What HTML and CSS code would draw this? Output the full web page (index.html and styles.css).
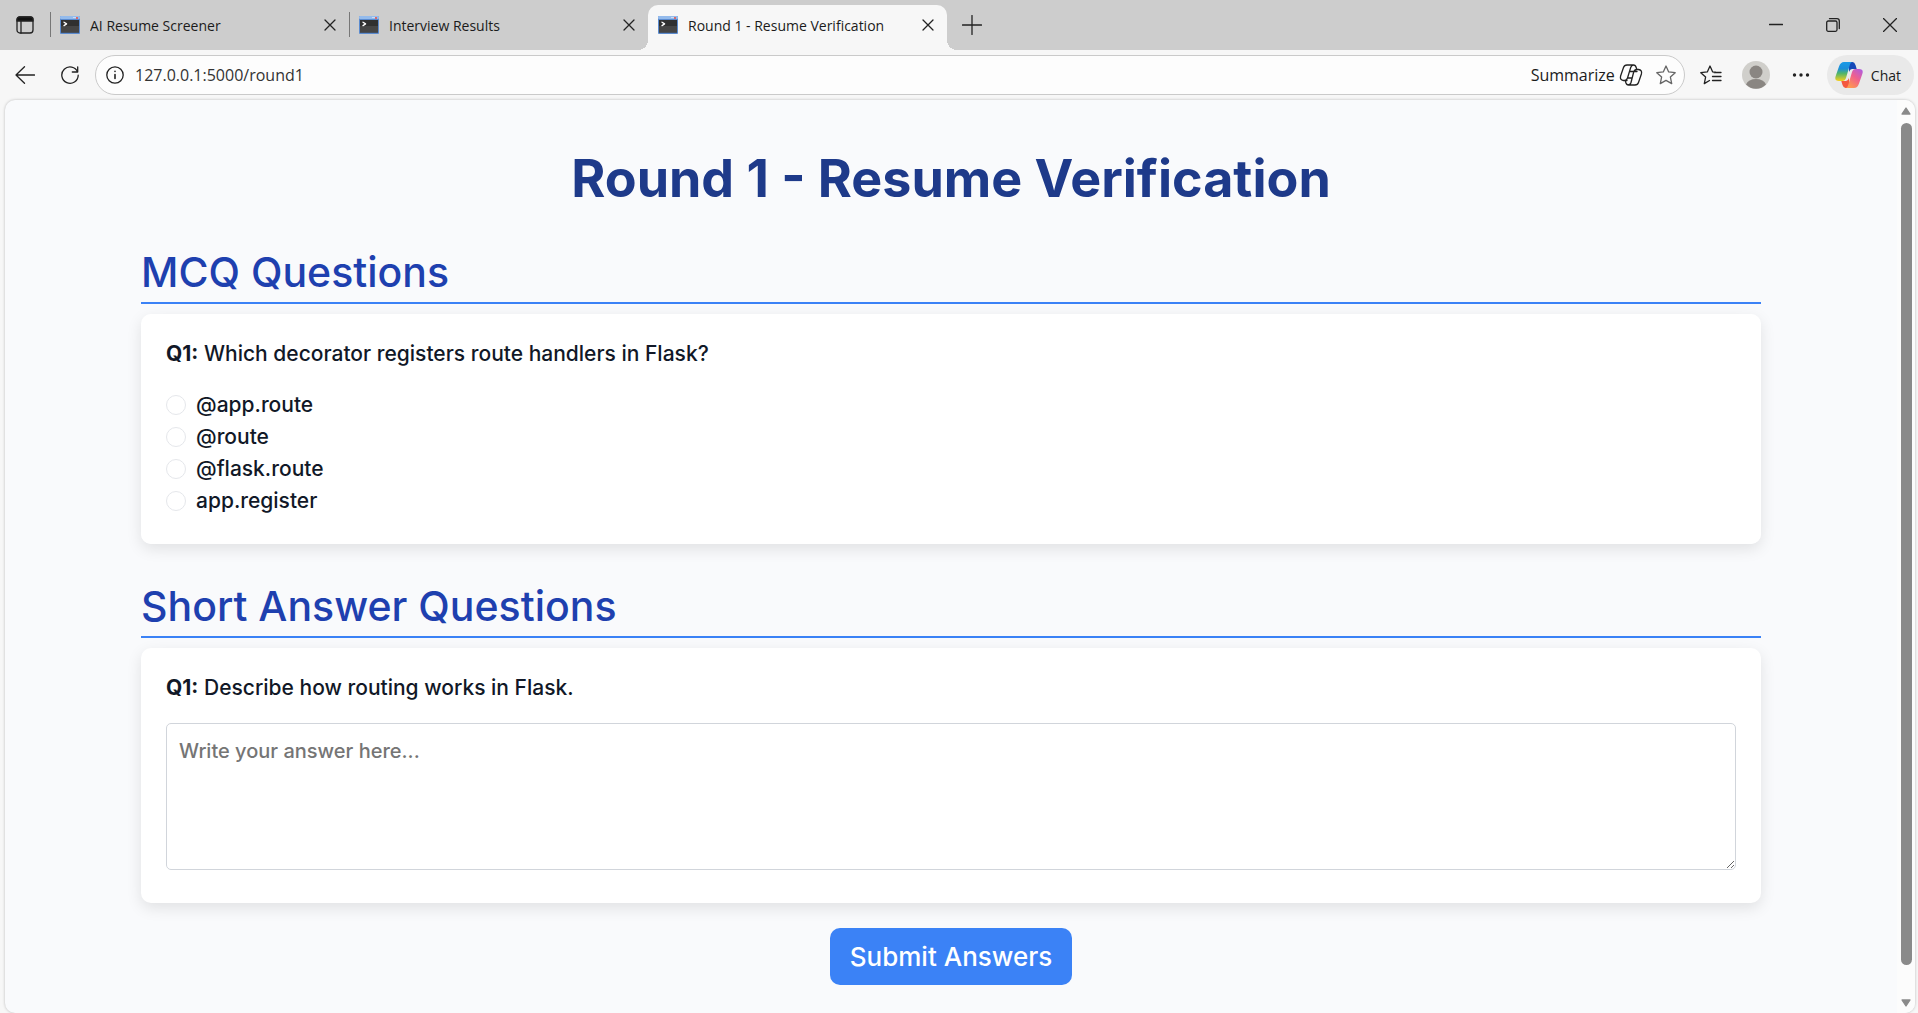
FILE: index.html
```html
<!DOCTYPE html>
<html lang="en">
<head>
  <meta charset="UTF-8">
  <meta name="viewport" content="width=device-width, initial-scale=1.0">
  <title>Round 1 - Resume Verification</title>
  <link rel="stylesheet" href="styles.css">
</head>
<body>
  <!-- Shared icons -->
  <svg class="sprite" aria-hidden="true">
    <defs>
      <symbol id="terminal" viewBox="0 0 20 18">
        <rect width="20" height="18" rx="1" fill="#5b8bcf"/>
        <rect width="20" height="3" rx="1" fill="#94bbec"/>
        <rect x="13" y="1" width="3" height="1" fill="#c9dcf5"/>
        <rect x="16" y="1" width="2" height="2" fill="#d8696b"/>
        <rect x="1" y="4" width="18" height="12.500" fill="#303030"/>
        <rect x="1" y="10" width="18" height="6.500" fill="#454545"/>
        <path d="M4 6.200l2.600 1.700L4 9.600" stroke="#fff" stroke-width="1.300" fill="none"/>
      </symbol>
      <symbol id="cross" viewBox="0 0 12 12"><path d="M1 1l10 10M11 1L1 11"/></symbol>
    </defs>
  </svg>

  <header class="tab-strip">
    <button type="button" class="icon-button tab-actions" aria-label="Tab actions">
      <svg width="18" height="18" viewBox="0 0 18 18"><rect x="1" y="1" width="16" height="16" rx="3"/><path d="M1 5V3.500Q1 1 3.500 1h11Q17 1 17 3.500V5z" fill="#111"/><path d="M5 5v12"/></svg>
    </button>
    <div class="tab">
      <svg class="favicon"><use href="#terminal"/></svg>
      <span class="tab-title">AI Resume Screener</span>
      <button type="button" class="icon-button close" aria-label="Close tab"><svg width="12" height="12"><use href="#cross"/></svg></button>
    </div>
    <div class="tab">
      <svg class="favicon"><use href="#terminal"/></svg>
      <span class="tab-title">Interview Results</span>
      <button type="button" class="icon-button close" aria-label="Close tab"><svg width="12" height="12"><use href="#cross"/></svg></button>
    </div>
    <div class="tab active">
      <svg class="favicon"><use href="#terminal"/></svg>
      <span class="tab-title">Round 1 - Resume Verification</span>
      <button type="button" class="icon-button close" aria-label="Close tab"><svg width="12" height="12"><use href="#cross"/></svg></button>
    </div>
    <button type="button" class="icon-button new-tab" aria-label="New tab">
      <svg width="20" height="20" viewBox="0 0 20 20"><path d="M10 .5v19M.5 10h19"/></svg>
    </button>
    <div class="window-buttons">
      <button type="button" class="icon-button" aria-label="Minimize"><svg width="14" height="14" viewBox="0 0 14 14"><path d="M.5 6.500h13"/></svg></button>
      <button type="button" class="icon-button" aria-label="Restore"><svg width="14" height="14" viewBox="0 0 14 14"><rect x=".7" y="3" width="10.300" height="10.300" rx="1.500"/><path d="M3.500.7H11q2.300 0 2.300 2.300v7.500"/></svg></button>
      <button type="button" class="icon-button" aria-label="Close"><svg width="14" height="14" viewBox="0 0 14 14"><path d="M.5.5l13 13M13.500.5l-13 13"/></svg></button>
    </div>
  </header>

  <nav class="toolbar">
    <button type="button" class="icon-button" aria-label="Back"><svg width="20" height="18" viewBox="0 0 20 18"><path d="M19.500 9H1M9.500.7L1 9l8.500 8.300"/></svg></button>
    <button type="button" class="icon-button" aria-label="Refresh"><svg width="18" height="18" viewBox="0 0 18 18"><path d="M16.600 6A8.200 8.200 0 1 0 17.200 9.200M16.700.8V6h-5.400"/></svg></button>
    <div class="address-bar">
      <svg class="info" width="18" height="18" viewBox="0 0 18 18"><circle cx="9" cy="9" r="8.200"/><path d="M9 8.500v4M9 5.300v.2" stroke-width="1.600"/></svg>
      <input type="text" class="url" aria-label="Address" value="127.0.0.1:5000/round1">
      <button type="button" class="summarize">Summarize
        <svg width="24" height="22" viewBox="0 0 24 22"><path d="M8 16.500H4.500Q.6 16 1.600 12L4.500 3.500Q5.300 1 8 1h6.500Q16.500 1 17.200 3.500L17.800 5.500h1.700q3.900.5 2.900 4.500l-2.900 8.500Q18.700 21 16 21H9.500Q7.500 21 6.800 18.500L6.300 16.500M14.500 1Q12.500 1 11.700 3.500L8.500 14q-.8 2.500-3 2.500M17.800 5.500q-2.300 0-3.100 2.500L12 18.500Q11.200 21 9 21M8.500 14H13M11 7.500h7"/></svg>
      </button>
      <button type="button" class="icon-button star" aria-label="Add to favorites"><svg width="20" height="20" viewBox="0 0 20 20"><path d="M10 1l2.700 5.900 6.500.8-4.800 4.400 1.300 6.500L10 15.400l-5.700 3.200 1.300-6.500L.8 7.700l6.500-.8z"/></svg></button>
    </div>
    <button type="button" class="icon-button favorites" aria-label="Favorites"><svg width="22" height="20" viewBox="0 0 22 20"><path d="M9.500 15.500l-5.200 3.100 1.300-6.500L.8 7.700l6.500-.8L10 1l2.700 5.900 2.800.3M14 7.500h7M12.500 11.500H21M12.500 15.500H21"/></svg></button>
    <button type="button" class="icon-button profile" aria-label="Profile"><svg class="solid" width="28" height="28" viewBox="0 0 28 28"><circle cx="14" cy="14" r="14" fill="#d0cfcb"/><circle cx="14" cy="11" r="6.500" fill="#8a8682"/><path d="M4 23.500Q6.500 18 14 18t10 5.500A14 14 0 0 1 4 23.500z" fill="#8a8682"/></svg></button>
    <button type="button" class="icon-button more" aria-label="Settings and more"><svg class="solid" width="18" height="4" viewBox="0 0 18 4"><g fill="#222"><circle cx="2.500" cy="2" r="1.700"/><circle cx="9" cy="2" r="1.700"/><circle cx="15.500" cy="2" r="1.700"/></g></svg></button>
    <button type="button" class="chat">
      <svg class="solid" width="28" height="26" viewBox="0 0 28 26">
        <defs>
          <linearGradient id="cool" x1="0" y1="0" x2="0" y2="1"><stop offset="0" stop-color="#1a9be8"/><stop offset=".35" stop-color="#1c8fd8"/><stop offset=".6" stop-color="#4fb56a"/><stop offset="1" stop-color="#f6cf1c"/></linearGradient>
          <linearGradient id="warm" x1="1" y1="0" x2=".3" y2="1"><stop offset="0" stop-color="#a85be8"/><stop offset=".5" stop-color="#f0608c"/><stop offset="1" stop-color="#ff9a50"/></linearGradient>
        </defs>
        <path d="M14 0h3.500q2 0 3 3l1.200 4H17q-2 0-3 3z" fill="#1549b8"/>
        <path d="M14 26h-3.500q-2 0-3-3l-1.200-4H11q2 0 3-3z" fill="#f4583f"/>
        <path d="M17.500 0H9Q5.500 0 4 4.500L.7 14Q-1 19 4 19h3.500q2.500 0 3.500-3l3.500-12Q15.500 0 17.500 0z" fill="url(#cool)"/>
        <path d="M10.500 26H19q3.500 0 5-4.500L27.300 12Q29 7 24 7h-3.500q-2.500 0-3.500 3l-3.500 12Q12.500 26 10.500 26z" fill="url(#warm)"/>
      </svg>
      Chat
    </button>
  </nav>

  <div class="viewport">
    <main class="page">
      <h1>Round 1 - Resume Verification</h1>
      <form>
        <h2>MCQ Questions</h2>
        <fieldset class="card">
          <legend class="question"><strong>Q1:</strong> Which decorator registers route handlers in Flask?</legend>
          <label class="option"><input type="radio" name="mcq1" value="a"> @app.route</label>
          <label class="option"><input type="radio" name="mcq1" value="b"> @route</label>
          <label class="option"><input type="radio" name="mcq1" value="c"> @flask.route</label>
          <label class="option"><input type="radio" name="mcq1" value="d"> app.register</label>
        </fieldset>

        <h2>Short Answer Questions</h2>
        <div class="card">
          <label class="question" for="short1"><strong>Q1:</strong> Describe how routing works in Flask.</label>
          <textarea id="short1" placeholder="Write your answer here..."></textarea>
        </div>

        <button type="submit" class="submit">Submit Answers</button>
      </form>
    </main>
    <div class="scrollbar" aria-hidden="true">
      <svg width="10" height="8" viewBox="0 0 10 8"><path d="M5 1l4 6H1z"/></svg>
      <div class="thumb"></div>
      <svg width="10" height="8" viewBox="0 0 10 8"><path d="M5 7L1 1h8z"/></svg>
    </div>
  </div>
</body>
</html>
```
FILE: styles.css
```css
* {
  box-sizing: border-box;
}

body {
  margin: 0;
  height: 100vh;
  display: flex;
  flex-direction: column;
  background-color: #f7f7f7;
  font-family: "Open Sans", sans-serif;
  font-size: 14px;
  color: #1b1b1b;
  overflow: hidden;
}

button {
  font: inherit;
  color: inherit;
  border: none;
  background: none;
  padding: 0;
  cursor: pointer;
}

svg {
  display: block;
  flex: none;
  fill: none;
  stroke: #222;
  stroke-width: 1.3;
  stroke-linecap: round;
  stroke-linejoin: round;
}

.solid {
  stroke: none;
}

.sprite {
  position: absolute;
  width: 0;
  height: 0;
}

.icon-button {
  display: flex;
  align-items: center;
  justify-content: center;
  flex: none;
}

/* Tab strip */
.tab-strip {
  display: flex;
  height: 50px;
  padding-top: 5px;
  flex: none;
  background-color: #cdcdcd;
}

.tab-actions {
  width: 50px;
  height: 40px;
}

.tab {
  display: flex;
  align-items: center;
  flex: 0 1 299px;
  height: 45px;
  padding: 0 13px 5px 10px;
  position: relative;
}

.tab:not(.active)::before {
  content: "";
  position: absolute;
  left: 0;
  top: 7px;
  width: 1px;
  height: 25px;
  background-color: #777;
}

.tab.active {
  background-color: #f7f7f7;
  border-radius: 10px 10px 0 0;
}

/* curved feet of the active tab */
.tab.active::before,
.tab.active::after {
  content: "";
  position: absolute;
  bottom: 0;
  width: 10px;
  height: 10px;
}

.tab.active::before {
  right: 100%;
  background: radial-gradient(circle at 0 0, #cdcdcd 10px, #f7f7f7 10px);
}

.tab.active::after {
  left: 100%;
  background: radial-gradient(circle at 100% 0, #cdcdcd 10px, #f7f7f7 10px);
}

.favicon {
  width: 20px;
  height: 18px;
  stroke: none;
}

.tab-title {
  flex: 1;
  margin-left: 10px;
  white-space: nowrap;
  overflow: hidden;
}

.new-tab {
  width: 50px;
  height: 40px;
}

.window-buttons {
  display: flex;
  margin-left: auto;
}

.window-buttons .icon-button {
  width: 57px;
  height: 40px;
}

/* Toolbar */
.toolbar {
  display: flex;
  align-items: center;
  flex: none;
  height: 50px;
  padding: 0 4px 0 2px;
}

.toolbar > .icon-button {
  width: 45px;
  height: 40px;
}

.address-bar {
  display: flex;
  align-items: center;
  flex: 1;
  height: 40px;
  margin: 0 4px 0 3px;
  padding: 0 8px 0 10px;
  border: 1px solid #cacaca;
  border-radius: 20px;
  background-color: #fdfdfd;
}

.url {
  flex: 1;
  margin-left: 11px;
  padding: 0;
  border: none;
  outline: none;
  background: none;
  font: inherit;
  font-size: 16px;
  color: #333;
}

.summarize {
  display: flex;
  align-items: center;
  gap: 4px;
  font-size: 16px;
}

.star {
  margin-left: 13px;
}

.star svg {
  stroke: #666;
}

.chat {
  display: flex;
  align-items: center;
  gap: 8px;
  height: 40px;
  margin-left: 3px;
  padding: 0 13px 0 8px;
  border-radius: 20px;
  background-color: #e9e9e9;
}

/* Page area */
.viewport {
  display: flex;
  flex: 1;
  min-height: 0;
  margin: 0 3px 0 5px;
  border-radius: 10px;
  background-color: #f9fafc;
  box-shadow: 0 0 3px rgba(0, 0, 0, 0.25);
  overflow: hidden;
}

.page {
  flex: 1;
  padding: 49px 136px 0;
  font-family: "Inter", sans-serif;
  font-size: 20px;
  font-weight: 500;
  line-height: 30px;
  color: #111827;
}

h1 {
  margin: 0 0 33px;
  font-size: 52px;
  line-height: 60px;
  font-weight: 700;
  text-align: center;
  color: #1e3a8a;
}

h2 {
  margin: 32px 0 10px;
  border-bottom: 2px solid #3b82f6;
  font-size: 41px;
  line-height: 60px;
  font-weight: 500;
  color: #1e40af;
}

.card {
  margin: 0 0 25px;
  padding: 25px 25px 27px;
  border: none;
  border-radius: 10px;
  background-color: #fff;
  box-shadow: 0 5px 15px rgba(0, 0, 0, 0.1);
}

.question {
  display: block;
  float: left;
  width: 100%;
  margin-bottom: 20px;
  padding: 0;
  font-size: 21px;
}

.option {
  display: flex;
  align-items: center;
  clear: both;
  height: 32px;
  font-size: 21px;
}

.option input {
  appearance: none;
  width: 20px;
  height: 20px;
  margin: 0 10px 0 0;
  border: 1px solid #e5e7eb;
  border-radius: 50%;
}

textarea {
  display: block;
  width: 100%;
  height: 147px;
  margin-bottom: 6px;
  padding: 12px;
  border: 1px solid #d1d5db;
  border-radius: 5px;
  font: inherit;
  resize: vertical;
}

textarea::placeholder {
  color: #757575;
}

.submit {
  display: block;
  margin: 0 auto;
  padding: 10px 20px;
  border-radius: 10px;
  background-color: #3b82f6;
  font-size: 26px;
  line-height: 37px;
  color: #fff;
}

.scrollbar {
  display: flex;
  flex-direction: column;
  align-items: center;
  gap: 8px;
  width: 18px;
  padding: 7px 0 6px;
  background-color: #fcfcfc;
}

.scrollbar svg {
  fill: #8a8a8a;
  stroke: #8a8a8a;
}

.thumb {
  width: 11px;
  flex: 1;
  margin-bottom: 26px;
  border-radius: 6px;
  background-color: #8a8a8a;
}
```
